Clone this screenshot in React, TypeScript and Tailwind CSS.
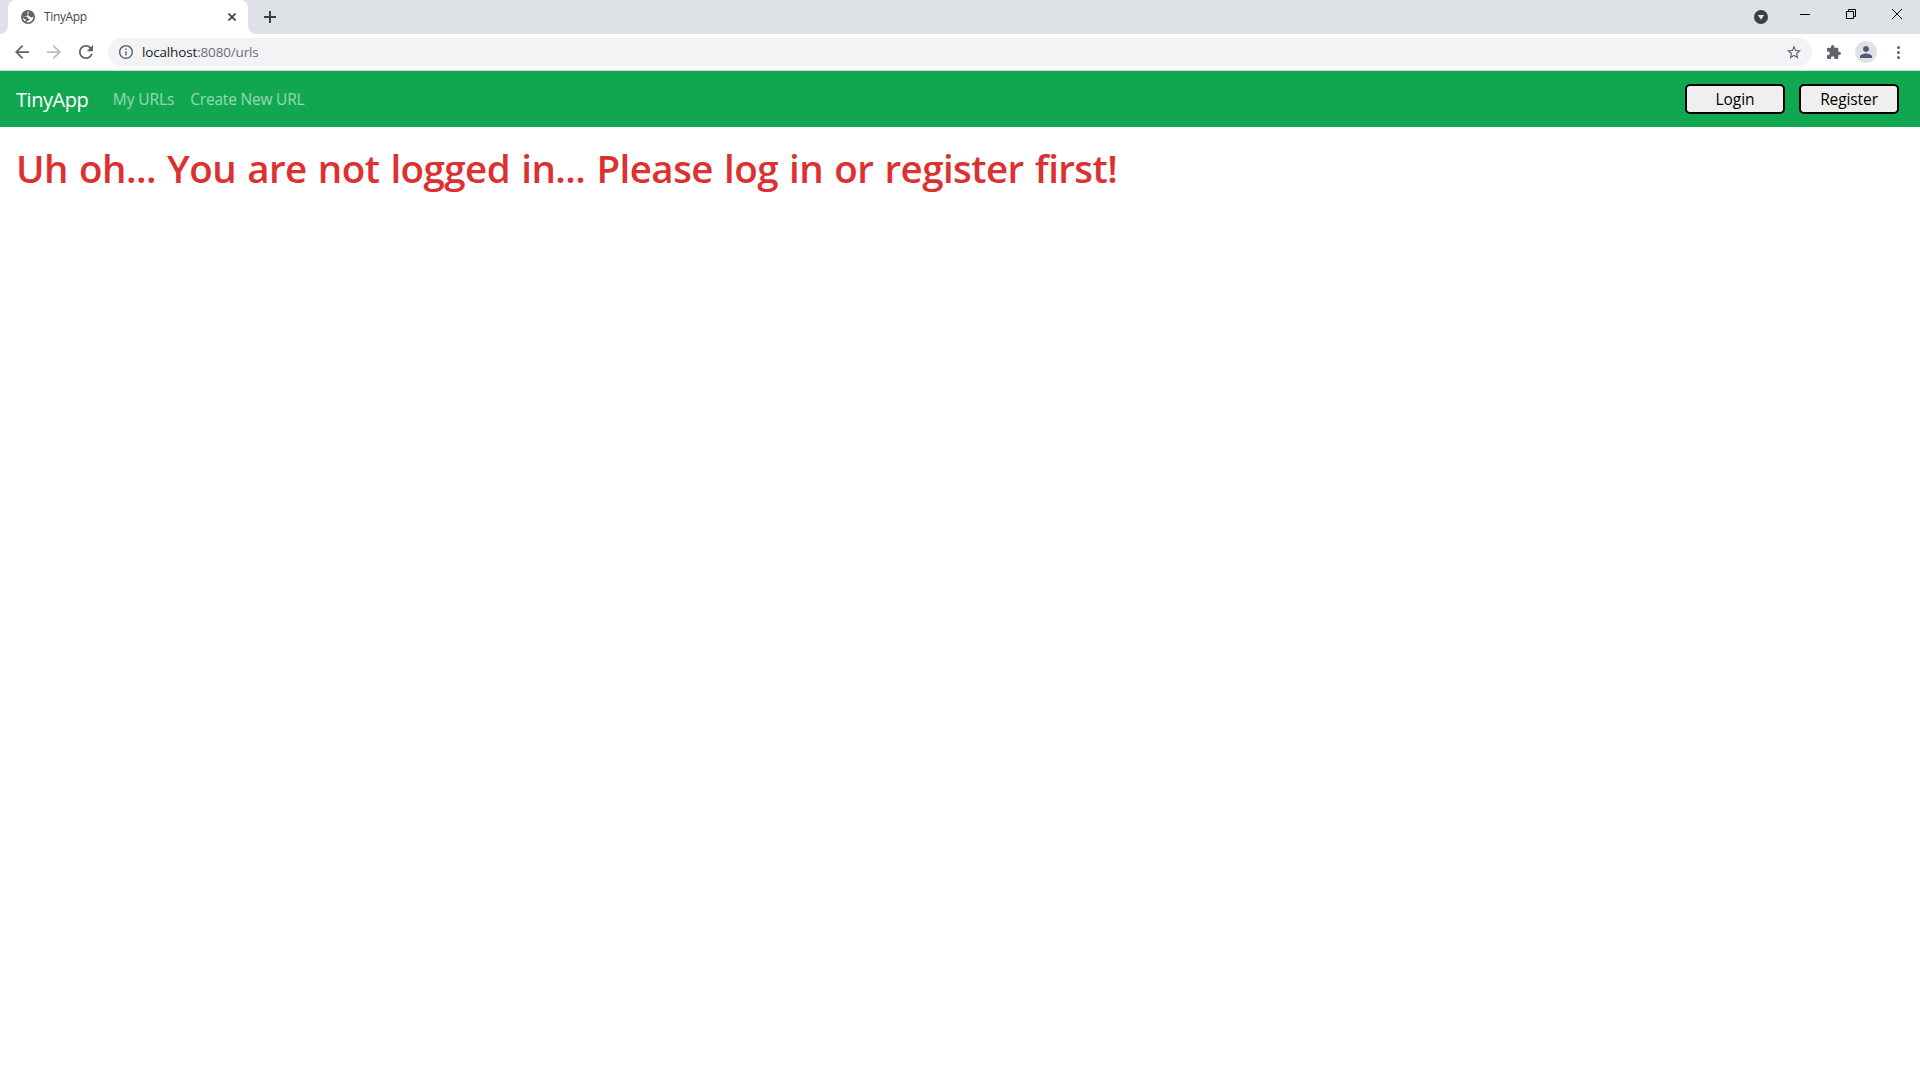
import React from 'react';

type IconProps = { d: string; box?: string; className: string };

function Icon({ d, box = '4 4 16 16', className }: IconProps) {
  return (
    <svg viewBox={box} className={`block shrink-0 ${className}`} fill="currentColor" aria-hidden="true">
      <path d={d} />
    </svg>
  );
}

const BACK = 'M20 11H7.83l5.59-5.59L12 4l-8 8 8 8 1.41-1.41L7.83 13H20v-2z';
const FORWARD = 'M12 4l-1.41 1.41L16.17 11H4v2h12.17l-5.58 5.59L12 20l8-8z';
const RELOAD =
  'M17.65 6.35C16.2 4.9 14.21 4 12 4c-4.42 0-7.99 3.58-7.99 8s3.57 8 7.99 8c3.73 0 6.84-2.55 7.73-6h-2.08c-.82 2.33-3.04 4-5.65 4-3.31 0-6-2.69-6-6s2.69-6 6-6c1.66 0 3.14.69 4.22 1.78L13 11h7V4l-2.35 2.35z';
const INFO =
  'M11 7h2v2h-2zm0 4h2v6h-2zm1-9C6.48 2 2 6.48 2 12s4.48 10 10 10 10-4.48 10-10S17.52 2 12 2zm0 18c-4.41 0-8-3.59-8-8s3.59-8 8-8 8 3.59 8 8-3.59 8-8 8z';
const STAR =
  'M22 9.24l-7.19-.62L12 2 9.19 8.63 2 9.24l5.46 4.73L5.82 21 12 17.27 18.18 21l-1.63-7.03L22 9.24zM12 15.4l-3.76 2.27 1-4.28-3.32-2.88 4.38-.38L12 6.1l1.71 4.04 4.38.38-3.32 2.88 1 4.28L12 15.4z';
const PUZZLE =
  'M20.5 11H19V7c0-1.1-.9-2-2-2h-4V3.5C13 2.12 11.88 1 10.5 1S8 2.12 8 3.5V5H4c-1.1 0-1.99.9-1.99 2v3.8H3.5c1.49 0 2.7 1.21 2.7 2.7s-1.21 2.7-2.7 2.7H2V20c0 1.1.9 2 2 2h3.8v-1.5c0-1.49 1.21-2.7 2.7-2.7 1.49 0 2.7 1.21 2.7 2.7V22H17c1.1 0 2-.9 2-2v-4h1.5c1.38 0 2.5-1.12 2.5-2.5S21.88 11 20.5 11z';
const PERSON =
  'M12 12c2.21 0 4-1.79 4-4s-1.79-4-4-4-4 1.79-4 4 1.79 4 4 4zm0 2c-2.67 0-8 1.34-8 4v2h16v-2c0-2.66-5.33-4-8-4z';

function Globe() {
  return (
    <svg viewBox="0 0 14 14" className="block size-3.5 shrink-0" aria-hidden="true">
      <circle cx="7" cy="7" r="7" fill="#5f6368" />
      <path
        d="M8.2 1.5 C7.2 1.7 6.3 2.4 6.3 3.3 L6.3 4.2 C6.3 4.8 7 4.9 7.5 4.9 L7.5 5.6 C7.5 6.2 8 6.4 8.8 6.4 L9.4 7 L10.4 7.4 C11.2 7.5 12 7 12.4 6.3 C12.7 9.5 10.3 12.4 7 12.4 L5.8 12.2 L5.8 11 L7.9 10.6 C8.6 10.2 8.7 9.5 8.3 9 L7.2 8.4 L6.4 7.3 L1.5 6.5 C1.5 8 2 9.3 3 10.4 C4 11.3 4.9 11.1 5.1 10.1 L4.4 9.3 L3.2 8.9 L1.5 7.3 L1.5 6.4 L6 6.4 Z"
        fill="#fff"
      />
    </svg>
  );
}

function TabStrip() {
  return (
    <div className="flex h-[34px] justify-between bg-[#dee1e6]">
      <div className="flex">
        <div className="w-2 bg-white">
          <div className="h-full rounded-br-lg bg-[#dee1e6]" />
        </div>
        <div className="bg-[#dee1e6]">
          <div className="flex h-full w-[240px] items-center rounded-t-lg bg-white pl-[13px] pr-3">
            <Globe />
            <span className="ml-[9px] flex-1 font-['Open_Sans','Noto_Sans',sans-serif] text-[12px] leading-4 tracking-[-0.35px] text-[#45494d]">
              TinyApp
            </span>
            <svg viewBox="0 0 8 8" className="size-2" stroke="#3c4043" strokeWidth="1.7">
              <path d="M0.5 0.5L7.5 7.5M7.5 0.5L0.5 7.5" />
            </svg>
          </div>
        </div>
        <div className="w-2 bg-white">
          <div className="h-full rounded-bl-lg bg-[#dee1e6]" />
        </div>
        <svg viewBox="0 0 12 12" className="ml-2 mt-[11px] size-3" stroke="#3c4043" strokeWidth="2">
          <path d="M6 0V12M0 6H12" />
        </svg>
      </div>
      <div className="flex pr-[18px]">
        <svg viewBox="0 0 14 14" className="mt-2.5 size-3.5">
          <circle cx="7" cy="7" r="7" fill="#3c4043" />
          <path d="M3.8 5h6.4L7 9.8z" fill="#dee1e6" />
        </svg>
        <div className="ml-8 mt-[14px] h-px w-2.5 bg-black" />
        <svg viewBox="0 0 10 10" className="ml-9 mt-[9px] size-2.5" fill="none" stroke="#000">
          <path d="M0.5 2.5H7.5V9.5H0.5zM2.5 2.5V0.5H9.5V7.5H7.5" />
        </svg>
        <svg viewBox="0 0 10 10" className="ml-9 mt-[9px] size-2.5" stroke="#000">
          <path d="M0 0L10 10M10 0L0 10" />
        </svg>
      </div>
    </div>
  );
}

function Toolbar() {
  return (
    <div className="flex h-[37px] items-center border-b border-[#d5d8dc] bg-white pl-[15px] pr-5 text-[#5f6368]">
      <Icon d={BACK} className="size-3.5" />
      <Icon d={FORWARD} className="ml-[18px] size-3.5 text-[#babcbe]" />
      <Icon d={RELOAD} className="ml-[18px] size-3.5" />
      <div className="ml-[15px] flex h-7 flex-1 items-center rounded-full bg-[#f1f3f4] pl-[11px] pr-[11px]">
        <Icon d={INFO} box="2 2 20 20" className="size-3.5" />
        <span className="ml-[9px] flex-1 font-['Open_Sans','Noto_Sans',sans-serif] text-[13.5px] leading-5 tracking-[-0.16px] text-[#6b6f74]">
          <span className="text-[#202124]">localhost</span>:8080/urls
        </span>
        <Icon d={STAR} box="2 2 20 19" className="size-3.5" />
      </div>
      <Icon d={PUZZLE} box="2 1 21 21" className="ml-[15px] size-3.5" />
      <div className="ml-3.5 flex size-[22px] items-center justify-center rounded-full bg-[#dee1e6] text-[#4f5b73]">
        <Icon d={PERSON} className="size-3" />
      </div>
      <div className="ml-5 flex flex-col gap-0.5">
        <span className="size-[3px] rounded-full bg-[#5f6368]" />
        <span className="size-[3px] rounded-full bg-[#5f6368]" />
        <span className="size-[3px] rounded-full bg-[#5f6368]" />
      </div>
    </div>
  );
}

function NavBar() {
  return (
    <nav className="flex h-14 items-center bg-[#10a750] pl-4 pr-[21px] font-['Open_Sans','Noto_Sans',sans-serif]">
      <a className="pt-0.5 text-[20px] leading-[30px] tracking-[-0.45px] text-white">TinyApp</a>
      <a className="ml-[24.5px] text-[15.5px] leading-6 tracking-[-0.1px] text-white/55">My URLs</a>
      <a className="ml-4 text-[15.5px] leading-6 tracking-[-0.2px] text-white/55">Create New URL</a>
      <div className="ml-auto flex gap-3.5">
        <button className="h-[30px] w-[100px] rounded-[5px] border-2 border-black bg-[#efefef] text-[15.5px] leading-6 tracking-[-0.08px] text-black">
          Login
        </button>
        <button className="h-[30px] w-[100px] rounded-[5px] border-2 border-black bg-[#efefef] text-[15.5px] leading-6 tracking-[-0.1px] text-black">
          Register
        </button>
      </div>
    </nav>
  );
}

export default function App() {
  return (
    <div className="flex h-[1085px] w-[1920px] flex-col overflow-hidden bg-white">
      <TabStrip />
      <Toolbar />
      <NavBar />
      <main className="flex-1 px-4 pt-[17px]">
        <h1 className="whitespace-nowrap font-['Open_Sans','Noto_Sans',sans-serif] text-[38.5px] font-semibold leading-[48px] tracking-[-0.56px] [word-spacing:1.7px] text-[#dc3131]">
          Uh oh... You are not logged in... Please log in or register first!
        </h1>
      </main>
    </div>
  );
}
